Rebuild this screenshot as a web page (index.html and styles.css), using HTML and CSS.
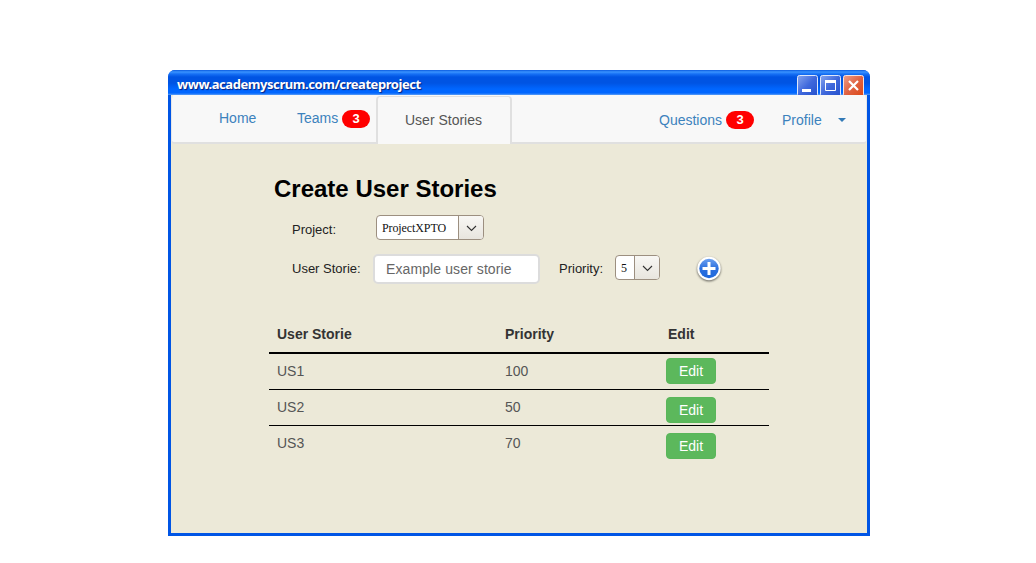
FILE: index.html
```html
<!DOCTYPE html>
<html lang="en">
<head>
<meta charset="utf-8">
<title>Create User Stories</title>
<link rel="stylesheet" href="styles.css">
</head>
<body>
<div class="window">
  <header class="titlebar">
    <span class="address">www.academyscrum.com/createproject</span>
    <div class="controls">
      <svg class="control" width="21" height="20" viewBox="0 0 21 20"><defs><linearGradient id="blue" x1="0" y1="0" x2="1" y2="1"><stop offset="0" stop-color="#86a5ee"/><stop offset=".5" stop-color="#3f68dc"/><stop offset="1" stop-color="#2450cc"/></linearGradient><linearGradient id="red" x1="0" y1="0" x2="1" y2="1"><stop offset="0" stop-color="#eea08a"/><stop offset=".5" stop-color="#e06242"/><stop offset="1" stop-color="#dc4612"/></linearGradient></defs><rect x=".5" y=".5" width="20" height="21" rx="2" fill="url(#blue)" stroke="#dfe8fb"/><path d="M5 14h9v3H5z" fill="#fff"/></svg>
      <svg class="control" width="21" height="20" viewBox="0 0 21 20"><rect x=".5" y=".5" width="20" height="21" rx="2" fill="url(#blue)" stroke="#dfe8fb"/><path d="M5.500 5.500h10v10h-10z" fill="none" stroke="#fff"/><path d="M5 5h11v3H5z" fill="#fff"/></svg>
      <svg class="control" width="21" height="20" viewBox="0 0 21 20"><rect x=".5" y=".5" width="20" height="21" rx="2" fill="url(#red)" stroke="#f6e4e0"/><path d="M6 6l9 9M15 6l-9 9" stroke="#fff" stroke-width="2.200"/></svg>
    </div>
  </header>
  <div class="page">
    <nav class="nav">
      <a class="link home">Home</a>
      <a class="link teams">Teams<span class="badge">3</span></a>
      <a class="tab">User Stories</a>
      <a class="link questions">Questions<span class="badge">3</span></a>
      <a class="link profile">Profile<span class="caret"></span></a>
    </nav>
    <main class="content">
      <h1 class="heading">Create User Stories</h1>
      <div class="row project-row">
        <label class="label">Project:</label>
        <div class="select project"><span class="value">ProjectXPTO</span><span class="arrow"><svg width="11" height="7" viewBox="0 0 11 7"><path d="M1 1l4.500 4.500L10 1" fill="none" stroke="#333" stroke-width="1.100"/></svg></span></div>
      </div>
      <div class="row story-row">
        <label class="label">User Storie:</label>
        <div class="input">Example user storie</div>
        <label class="label priority-label">Priority:</label>
        <div class="select priority"><span class="value">5</span><span class="arrow"><svg width="11" height="7" viewBox="0 0 11 7"><path d="M1 1l4.500 4.500L10 1" fill="none" stroke="#333" stroke-width="1.100"/></svg></span></div>
        <svg class="add" width="28" height="28" viewBox="0 0 28 28"><defs><linearGradient id="plus" x1="0" y1="0" x2="0" y2="1"><stop offset="0" stop-color="#6a9ff0"/><stop offset=".5" stop-color="#2d70de"/><stop offset="1" stop-color="#1d68dd"/></linearGradient></defs><circle cx="14" cy="13.500" r="11.700" fill="#fff"/><circle cx="14" cy="13.500" r="9.700" fill="url(#plus)"/><path d="M14 7v13M7.500 13.500h13" stroke="#fff" stroke-width="3"/></svg>
      </div>
      <div class="table">
        <div class="tr head"><span>User Storie</span><span>Priority</span><span>Edit</span></div>
        <div class="tr"><span>US1</span><span>100</span><button class="edit first">Edit</button></div>
        <div class="tr"><span>US2</span><span>50</span><button class="edit">Edit</button></div>
        <div class="tr last"><span>US3</span><span>70</span><button class="edit">Edit</button></div>
      </div>
    </main>
  </div>
</div>
</body>
</html>
```
FILE: styles.css
```css
* { box-sizing: border-box; }
body { margin: 0; background: #fff; font-family: "Liberation Sans", Arial, sans-serif; font-size: 14px; color: #333; }
.window { width: 702px; height: 466px; margin: 70px 0 0 168px; padding: 0 3px 3px; background: #0055e5; border-radius: 7px 7px 0 0; display: flex; flex-direction: column; overflow: hidden; }
.titlebar { flex: none; height: 25px; margin: 0 -3px; padding: 0 6px 0 9px; display: flex; justify-content: space-between; background: linear-gradient(#0a5be0 0, #3a93ff 2px, #1670f5 4px, #0054e3 7px, #0054e3 13px, #0066ff 19px, #0066ff 23px, #5c9ef5 25px); }
.address { font: bold 13px/28px "Noto Sans", sans-serif; letter-spacing: -0.440px; color: #fff; text-shadow: 1px 1px 1px #0a1f7a; white-space: nowrap; }
.controls { display: flex; gap: 2px; padding-top: 5px; }
.control { display: block; }
.page { flex: 1; background: #ece9d8; }
.nav { height: 49px; display: flex; align-items: flex-start; background: #f8f8f8; border: 1px solid #e7e7e7; border-bottom: 2px solid #e0e0e0; border-radius: 4px; border-top-color: #f8f8f8; }
.link { color: #3c82bd; line-height: 20px; display: flex; align-items: center; white-space: nowrap; }
.home { width: 78px; margin: 12px 0 0 47px; }
.teams { width: 79px; margin-top: 12px; }
.badge { width: 28px; height: 18px; border-radius: 9px; margin-left: 4px; background: #f00; color: #fff; font: bold 13px/18px "Liberation Sans", Arial, sans-serif; text-align: center; }
.teams .badge { margin-top: 2px; }
.tab { width: 136px; height: 48px; padding-left: 27px; line-height: 46px; color: #555; background: #f8f8f8; border: 2px solid #e0e0e0; border-top-width: 1px; border-bottom: 0; border-radius: 4px 4px 0 0; }
.questions { margin: 14px 0 0 147px; width: 123px; }
.profile { margin-top: 14px; }
.caret { margin-left: 16px; border: 4px solid transparent; border-top-color: #337ab7; border-bottom: 0; }
.content { padding: 30px 98px 0; }
.heading { margin: 0 0 0 5px; font-size: 24px; line-height: 30px; color: #000; }
.row { display: flex; align-items: center; padding-left: 23px; }
.project-row { height: 25px; margin-top: 11px; }
.story-row { height: 29px; margin-top: 14px; }
.label { width: 82px; font-size: 13px; line-height: 20px; color: #222; white-space: nowrap; }
.project-row .label { width: 84px; padding-top: 4px; }
.select { height: 25px; display: flex; border: 1px solid #9c8f80; border-radius: 4px; background: #fff; overflow: hidden; }
.project { width: 108px; }
.priority { width: 45px; margin: -2px 0 0; }
.value { flex: 1; padding-left: 5px; font: 12px/25px "Liberation Serif", serif; letter-spacing: -0.100px; color: #111; }
.arrow { width: 25px; border-left: 1px solid #9c8f80; background: linear-gradient(#f8f7f4, #e8e5de); display: flex; align-items: center; justify-content: center; }
.arrow svg { margin-top: 1px; }
.input { width: 167px; height: 30px; margin: 1px 0 0 -1px; padding-left: 11px; background: #fff; border: 2px solid #dcdcdc; border-radius: 5px; line-height: 26px; letter-spacing: 0.100px; color: #666; }
.priority-label { width: 56px; margin-left: 19px; }
.add { margin-left: 35px; filter: drop-shadow(0 1px 1px rgba(0, 0, 0, .6)); }
.table { width: 500px; margin-top: 31px; }
.tr { height: 36px; display: grid; grid-template-columns: 228px 161px 1fr; padding-left: 8px; line-height: 34px; border-bottom: 1px solid #000; color: #555; }
.head { height: 40px; line-height: 40px; font-weight: bold; color: #333; border-bottom: 2px solid #000; }
.head span:last-child { padding-left: 2px; }
.last { border: 0; }
.edit { width: 50px; height: 26px; margin: 7px 0 0; padding: 0; font: 14px/24px "Liberation Sans", Arial, sans-serif; color: #fff; background: #5cb85c; border: 1px solid #5ab65a; border-radius: 4px; }
.first { margin-top: 4px; }
```
